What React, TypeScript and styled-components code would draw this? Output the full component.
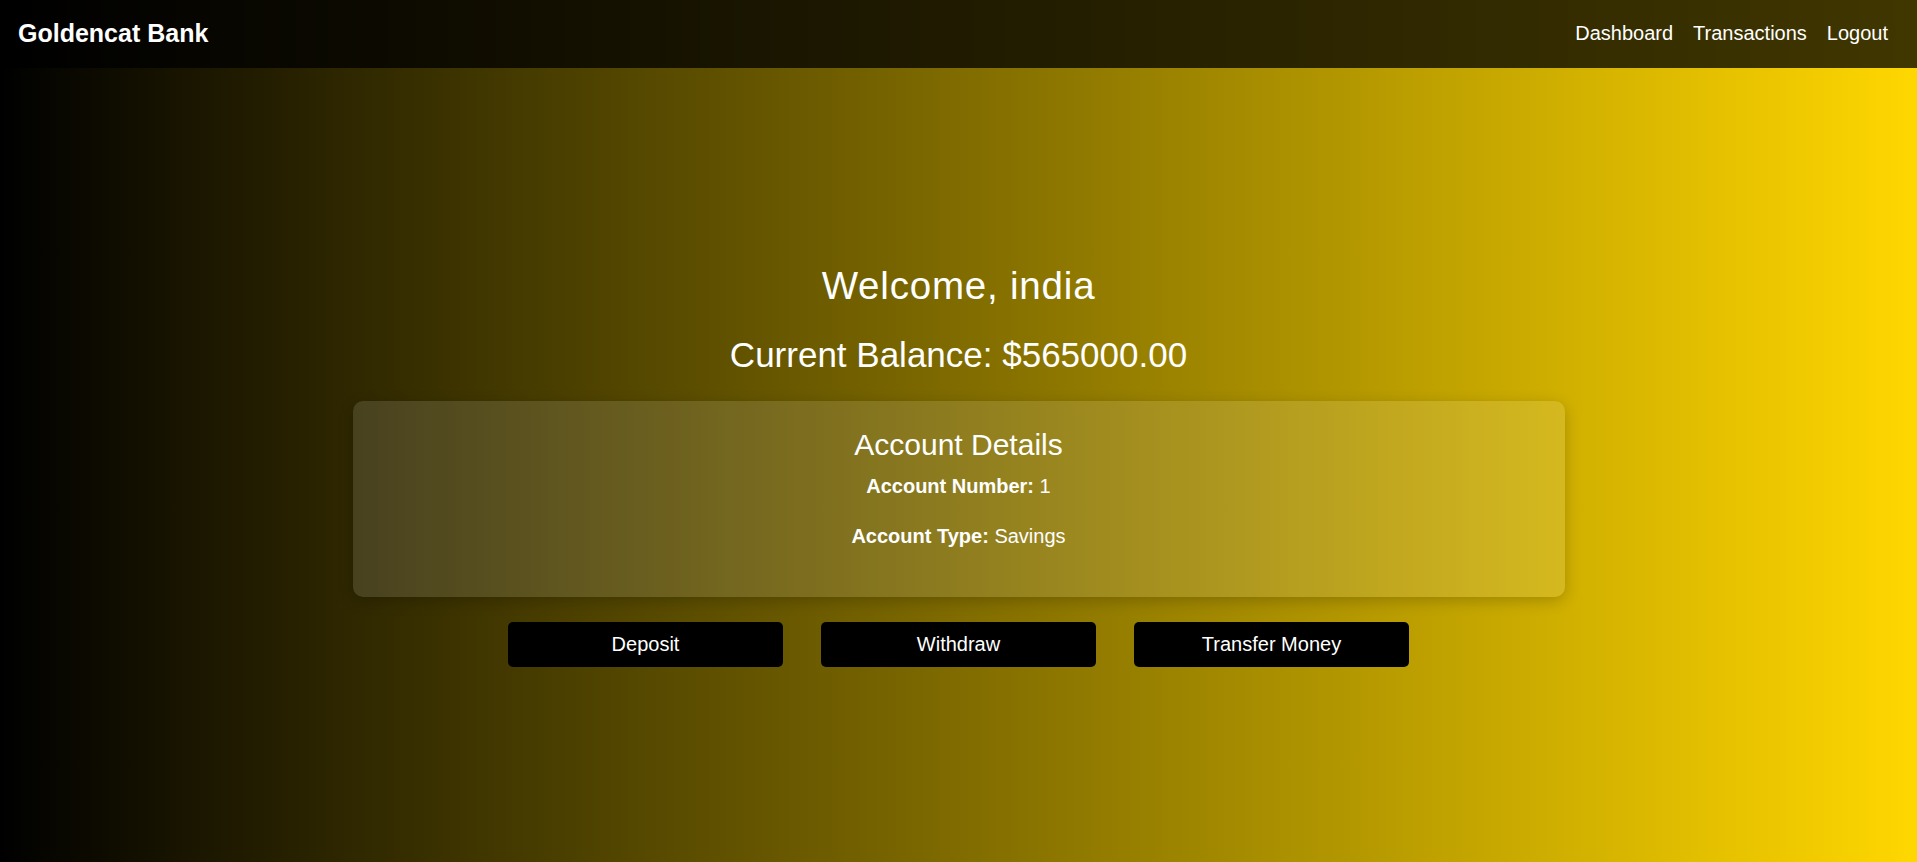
import React from "react";
import styled, { createGlobalStyle } from "styled-components";

const GlobalStyle = createGlobalStyle`
  * {
    box-sizing: border-box;
  }
  body {
    margin: 0;
    font-family: "Liberation Sans", Arial, sans-serif;
    color: #fff;
    background: linear-gradient(to right, #000000, #ffd700);
    min-height: 100vh;
  }
`;

const Page = styled.div`
  min-height: 100vh;
  display: flex;
  flex-direction: column;
`;

const Header = styled.header`
  height: 68px;
  display: flex;
  align-items: center;
  justify-content: space-between;
  padding: 0 29px 2px 18px;
  background: rgba(0, 0, 0, 0.75);
`;

const Logo = styled.div`
  font-size: 25px;
  font-weight: bold;
  line-height: 1.15;
`;

const Nav = styled.nav`
  display: flex;
  gap: 20px;
`;

const NavLink = styled.a`
  color: #fff;
  font-size: 20px;
  line-height: 1.15;
  text-decoration: none;
  cursor: pointer;
`;

const Main = styled.main`
  display: flex;
  flex-direction: column;
  align-items: center;
  padding-top: 196px;
  text-align: center;
`;

const Welcome = styled.h1`
  margin: 0;
  font-size: 38.5px;
  font-weight: normal;
  letter-spacing: 0.8px;
  line-height: 1.15;
`;

const Balance = styled.h2`
  margin: 27px 0 0;
  font-size: 35px;
  font-weight: normal;
  line-height: 1.15;
`;

const Card = styled.section`
  width: 1212px;
  margin-top: 25px;
  padding: 27px 20px 49px;
  border-radius: 10px;
  background: rgba(255, 255, 255, 0.12);
  box-shadow: 0 4px 15px rgba(0, 0, 0, 0.2);
`;

const CardTitle = styled.h3`
  margin: 0;
  font-size: 30px;
  font-weight: normal;
  line-height: 1.15;
`;

const Detail = styled.p<{ $gap: number }>`
  margin: ${(p) => p.$gap}px 0 0;
  font-size: 20px;
  line-height: 1.15;
`;

const Actions = styled.div`
  display: flex;
  gap: 38px;
  margin-top: 25px;
`;

const ActionButton = styled.button`
  width: 275px;
  height: 45px;
  border: none;
  border-radius: 5px;
  background: #000;
  color: #fff;
  font-family: "Liberation Sans", Arial, sans-serif;
  font-size: 20px;
  cursor: pointer;
`;

export default function App() {
  const account = { name: "india", balance: 565000, number: 1, type: "Savings" };

  return (
    <Page>
      <GlobalStyle />
      <Header>
        <Logo>Goldencat Bank</Logo>
        <Nav>
          <NavLink>Dashboard</NavLink>
          <NavLink>Transactions</NavLink>
          <NavLink>Logout</NavLink>
        </Nav>
      </Header>
      <Main>
        <Welcome>Welcome, {account.name}</Welcome>
        <Balance>Current Balance: ${account.balance.toFixed(2)}</Balance>
        <Card>
          <CardTitle>Account Details</CardTitle>
          <Detail $gap={13}>
            <strong>Account Number:</strong> {account.number}
          </Detail>
          <Detail $gap={27}>
            <strong>Account Type:</strong> {account.type}
          </Detail>
        </Card>
        <Actions>
          <ActionButton>Deposit</ActionButton>
          <ActionButton>Withdraw</ActionButton>
          <ActionButton>Transfer Money</ActionButton>
        </Actions>
      </Main>
    </Page>
  );
}
